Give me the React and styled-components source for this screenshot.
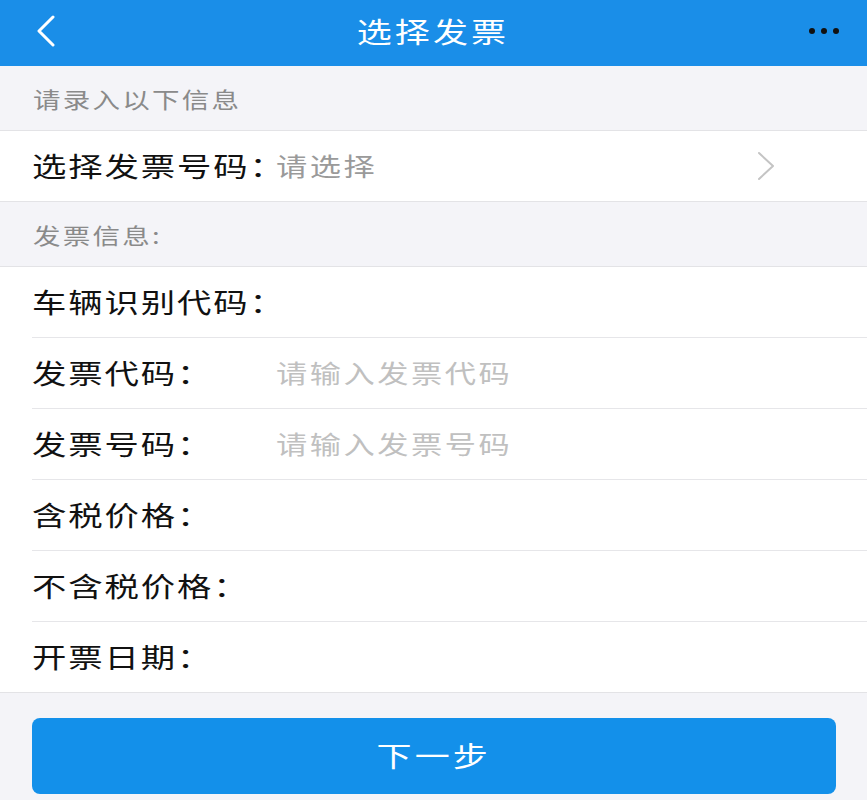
import styled, { createGlobalStyle, css } from 'styled-components'

const GlobalStyle = createGlobalStyle`
  html, body {
    margin: 0;
    padding: 0;
    background: #f4f4f8;
    font-family: "Noto Sans CJK SC", "Noto Sans", sans-serif;
  }
  * {
    box-sizing: border-box;
  }
`

// the screenshot is wider than tall, so the glyphs read a bit wide
const wide = css`
  display: inline-block;
  transform: scaleX(1.25);
  transform-origin: ${(p) => (p.center ? 'center' : 'left')} center;
  white-space: nowrap;
`

const fields = [
  { label: '车辆识别代码：' },
  { label: '发票代码：', placeholder: '请输入发票代码' },
  { label: '发票号码：', placeholder: '请输入发票号码' },
  { label: '含税价格：' },
  { label: '不含税价格：' },
  { label: '开票日期：' },
]

function App() {
  return (
    <Page>
      <GlobalStyle />
      <Header>
        <BackButton>
          <svg width="24" height="32" viewBox="0 0 24 32">
            <path d="M19 2 L5 16 L19 30" fill="none" stroke="#fff" strokeWidth="3" strokeLinecap="round" strokeLinejoin="round" />
          </svg>
        </BackButton>
        <Title center>选择发票</Title>
        <MoreButton>
          <Dot />
          <Dot />
          <Dot />
        </MoreButton>
      </Header>

      <SectionTitle>
        <SectionText>请录入以下信息</SectionText>
      </SectionTitle>
      <Group>
        <Row last>
          <Label>
            <LabelText>选择发票号码：</LabelText>
          </Label>
          <Value>
            <ValueText muted>请选择</ValueText>
          </Value>
          <Arrow>
            <svg width="22" height="30" viewBox="0 0 22 30">
              <path d="M4 2 L18 15 L4 28" fill="none" stroke="#c4c4c4" strokeWidth="2" strokeLinecap="round" strokeLinejoin="round" />
            </svg>
          </Arrow>
        </Row>
      </Group>

      <SectionTitle>
        <SectionText>发票信息:</SectionText>
      </SectionTitle>
      <Group>
        {fields.map((f, i) => (
          <Row key={f.label} last={i === fields.length - 1}>
            <Label>
              <LabelText>{f.label}</LabelText>
            </Label>
            {f.placeholder && (
              <Value>
                <ValueText>{f.placeholder}</ValueText>
              </Value>
            )}
          </Row>
        ))}
      </Group>

      <Footer>
        <NextButton>
          <ButtonText center>下一步</ButtonText>
        </NextButton>
      </Footer>
    </Page>
  )
}

const Page = styled.div`
  width: 100%;
  min-height: 800px;
  background: #f4f4f8;
  display: flex;
  flex-direction: column;
`

const Header = styled.div`
  height: 66px;
  background: #1a8ee8;
  display: flex;
  align-items: center;
  justify-content: space-between;
  padding: 0 28px 0 34px;
`

const BackButton = styled.div`
  width: 30px;
  display: flex;
  align-items: center;
  margin-top: -4px;
`

const Title = styled.div`
  ${wide}
  color: #fff;
  font-size: 28px;
  letter-spacing: 2.5px;
  margin-top: -4px;
  margin-right: 6px;
`

const MoreButton = styled.div`
  display: flex;
  gap: 6px;
  align-items: center;
  margin-top: -4px;
`

const Dot = styled.span`
  width: 6px;
  height: 6px;
  border-radius: 50%;
  background: #111;
`

const SectionTitle = styled.div`
  height: 65px;
  display: flex;
  align-items: center;
  padding-left: 33px;
  border-bottom: 1px solid #e3e3e6;
`

const SectionText = styled.span`
  ${wide}
  color: #8a8a8a;
  font-size: 22px;
  letter-spacing: 1.8px;
`

const Group = styled.div`
  background: #fff;
  padding-left: 32px;
  border-bottom: 1px solid #e3e3e6;
`

const Row = styled.div`
  height: ${(p) => (p.last ? '70px' : '71px')};
  display: flex;
  align-items: center;
  border-bottom: ${(p) => (p.last ? 'none' : '1px solid #e6e6e9')};
`

const Label = styled.div`
  width: 244px;
  flex-shrink: 0;
  margin-top: -3px;
`

const LabelText = styled.span`
  ${wide}
  color: #111;
  font-size: 27.5px;
  letter-spacing: 1.5px;
  font-feature-settings: "halt";
`

const Value = styled.div`
  flex: 1;
  margin-top: -3px;
`

const ValueText = styled.span`
  ${wide}
  color: ${(p) => (p.muted ? '#9a9a9a' : '#c0c0c0')};
  font-size: 25px;
  letter-spacing: 2px;
`

const Arrow = styled.div`
  width: 112px;
  display: flex;
  align-items: center;
`

const Footer = styled.div`
  padding: 25px 31px 0 32px;
`

const NextButton = styled.div`
  height: 76px;
  border-radius: 8px;
  background: #1390ea;
  display: flex;
  align-items: center;
  justify-content: center;
`

const ButtonText = styled.span`
  ${wide}
  color: #fff;
  font-size: 28px;
  letter-spacing: 2.5px;
  margin-top: -2px;
`

export default App
